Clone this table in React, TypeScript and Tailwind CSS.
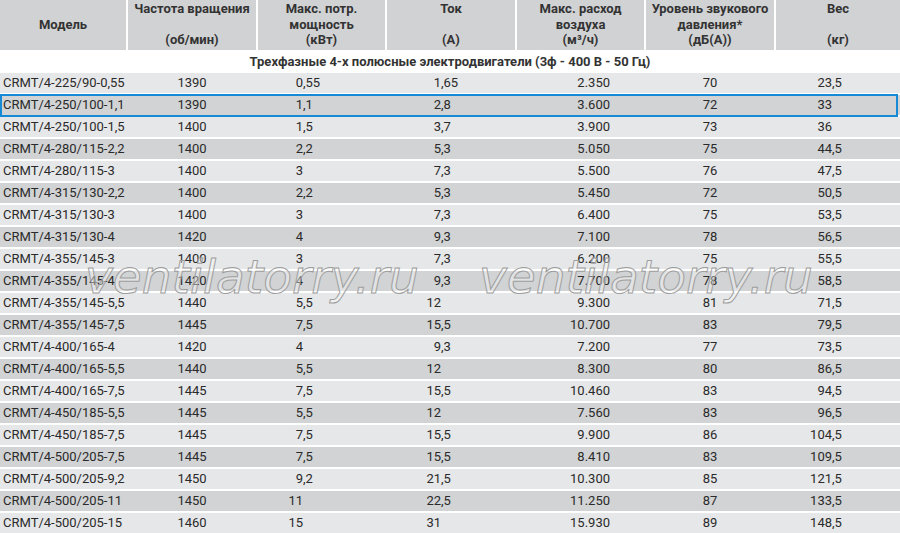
const cols = 'grid grid-cols-[126px_128px_127px_128px_127px_128px_1fr] gap-x-[2px]'

const rows: string[][] = [
  ['CRMT/4-225/90-0,55', '1390', '0,55', '1,65', '2.350', '70', '23,5'],
  ['CRMT/4-250/100-1,1', '1390', '1,1', '2,8', '3.600', '72', '33'],
  ['CRMT/4-250/100-1,5', '1400', '1,5', '3,7', '3.900', '73', '36'],
  ['CRMT/4-280/115-2,2', '1400', '2,2', '5,3', '5.050', '75', '44,5'],
  ['CRMT/4-280/115-3', '1400', '3', '7,3', '5.500', '76', '47,5'],
  ['CRMT/4-315/130-2,2', '1400', '2,2', '5,3', '5.450', '72', '50,5'],
  ['CRMT/4-315/130-3', '1400', '3', '7,3', '6.400', '75', '53,5'],
  ['CRMT/4-315/130-4', '1420', '4', '9,3', '7.100', '78', '56,5'],
  ['CRMT/4-355/145-3', '1400', '3', '7,3', '6.200', '75', '55,5'],
  ['CRMT/4-355/145-4', '1420', '4', '9,3', '7.700', '78', '58,5'],
  ['CRMT/4-355/145-5,5', '1440', '5,5', '12', '9.300', '81', '71,5'],
  ['CRMT/4-355/145-7,5', '1445', '7,5', '15,5', '10.700', '83', '79,5'],
  ['CRMT/4-400/165-4', '1420', '4', '9,3', '7.200', '77', '73,5'],
  ['CRMT/4-400/165-5,5', '1440', '5,5', '12', '8.300', '80', '86,5'],
  ['CRMT/4-400/165-7,5', '1445', '7,5', '15,5', '10.460', '83', '94,5'],
  ['CRMT/4-450/185-5,5', '1445', '5,5', '12', '7.560', '83', '96,5'],
  ['CRMT/4-450/185-7,5', '1445', '7,5', '15,5', '9.900', '86', '104,5'],
  ['CRMT/4-500/205-7,5', '1445', '7,5', '15,5', '8.410', '83', '109,5'],
  ['CRMT/4-500/205-9,2', '1450', '9,2', '21,5', '10.300', '85', '121,5'],
  ['CRMT/4-500/205-11', '1450', '11', '22,5', '11.250', '87', '133,5'],
  ['CRMT/4-500/205-15', '1460', '15', '31', '15.930', '89', '148,5'],
]

// numbers lined up on the comma, like in the source pdf
function Dec({ v, box }: { v: string; box: string }) {
  const [int, frac] = v.split(',')
  return (
    <>
      <span className={`inline-block text-right ${box}`}>{int}</span>
      {frac !== undefined && <span>,{frac}</span>}
    </>
  )
}

function HeadCell({ lines }: { lines: string[] }) {
  return (
    <div className="bg-[#d1d2d4] flex flex-col items-center pt-[1px] leading-[15.5px]">
      {lines.map((l, i) => (
        <span key={i} className="h-[15.5px]">{l}</span>
      ))}
    </div>
  )
}

export default function App() {
  return (
    <div className="relative w-[900px] h-[533px] overflow-hidden bg-white font-['Roboto',sans-serif] text-[13px] text-[#2a2a2a]">
      <div className="flex flex-col gap-y-[2px]">

        {/* Header */}
        <div className={`${cols} h-[50px] font-bold text-[#333]`}>
          <div className="bg-[#d1d2d4] flex items-center justify-center">Модель</div>
          <HeadCell lines={['Частота вращения', '', '(об/мин)']} />
          <HeadCell lines={['Макс. потр.', 'мощность', '(кВт)']} />
          <HeadCell lines={['Ток', '', '(А)']} />
          <HeadCell lines={['Макс. расход', 'воздуха', '(м³/ч)']} />
          <HeadCell lines={['Уровень звукового', 'давления*', '(дБ(А))']} />
          <HeadCell lines={['Вес', '', '(кг)']} />
        </div>

        {/* Section title */}
        <div className="h-[19px] flex items-center justify-center font-bold text-[#333]">
          Трехфазные 4-х полюсные электродвигатели (3ф - 400 В - 50 Гц)
        </div>

        {/* Rows */}
        {rows.map((r, i) => (
          <div key={r[0]} className={`${cols} relative h-[20px] leading-[20px] ${i % 2 === 0 ? 'bg-[#e6e7e8]' : 'bg-[#d1d3d4]'}`}>
            <div className="pl-[3px] whitespace-nowrap">{r[0]}</div>
            <div className="text-center">{r[1]}</div>
            <div className="pl-[29px] whitespace-nowrap"><Dec v={r[2]} box="w-[16px]" /></div>
            <div className="pl-[38px] whitespace-nowrap"><Dec v={r[3]} box="w-[16px]" /></div>
            <div className="text-right pr-[34px]">{r[4]}</div>
            <div className="text-center">{r[5]}</div>
            <div className="pl-[32px] whitespace-nowrap"><Dec v={r[6]} box="w-[24px]" /></div>
            {i === 1 && (
              <div className="absolute left-0 right-[2px] -top-[1px] -bottom-[2px] border-2 border-[#168ad7]" />
            )}
          </div>
        ))}
      </div>

      {/* Watermark */}
      <div className="pointer-events-none absolute left-[85px] top-[253px] flex gap-x-[60px] font-['DejaVu_Sans',sans-serif] italic text-[47px] leading-none text-white/40 [-webkit-text-stroke:1px_#9e9e9e]">
        <span>ventilatorry.ru</span>
        <span>ventilatorry.ru</span>
      </div>
    </div>
  )
}
